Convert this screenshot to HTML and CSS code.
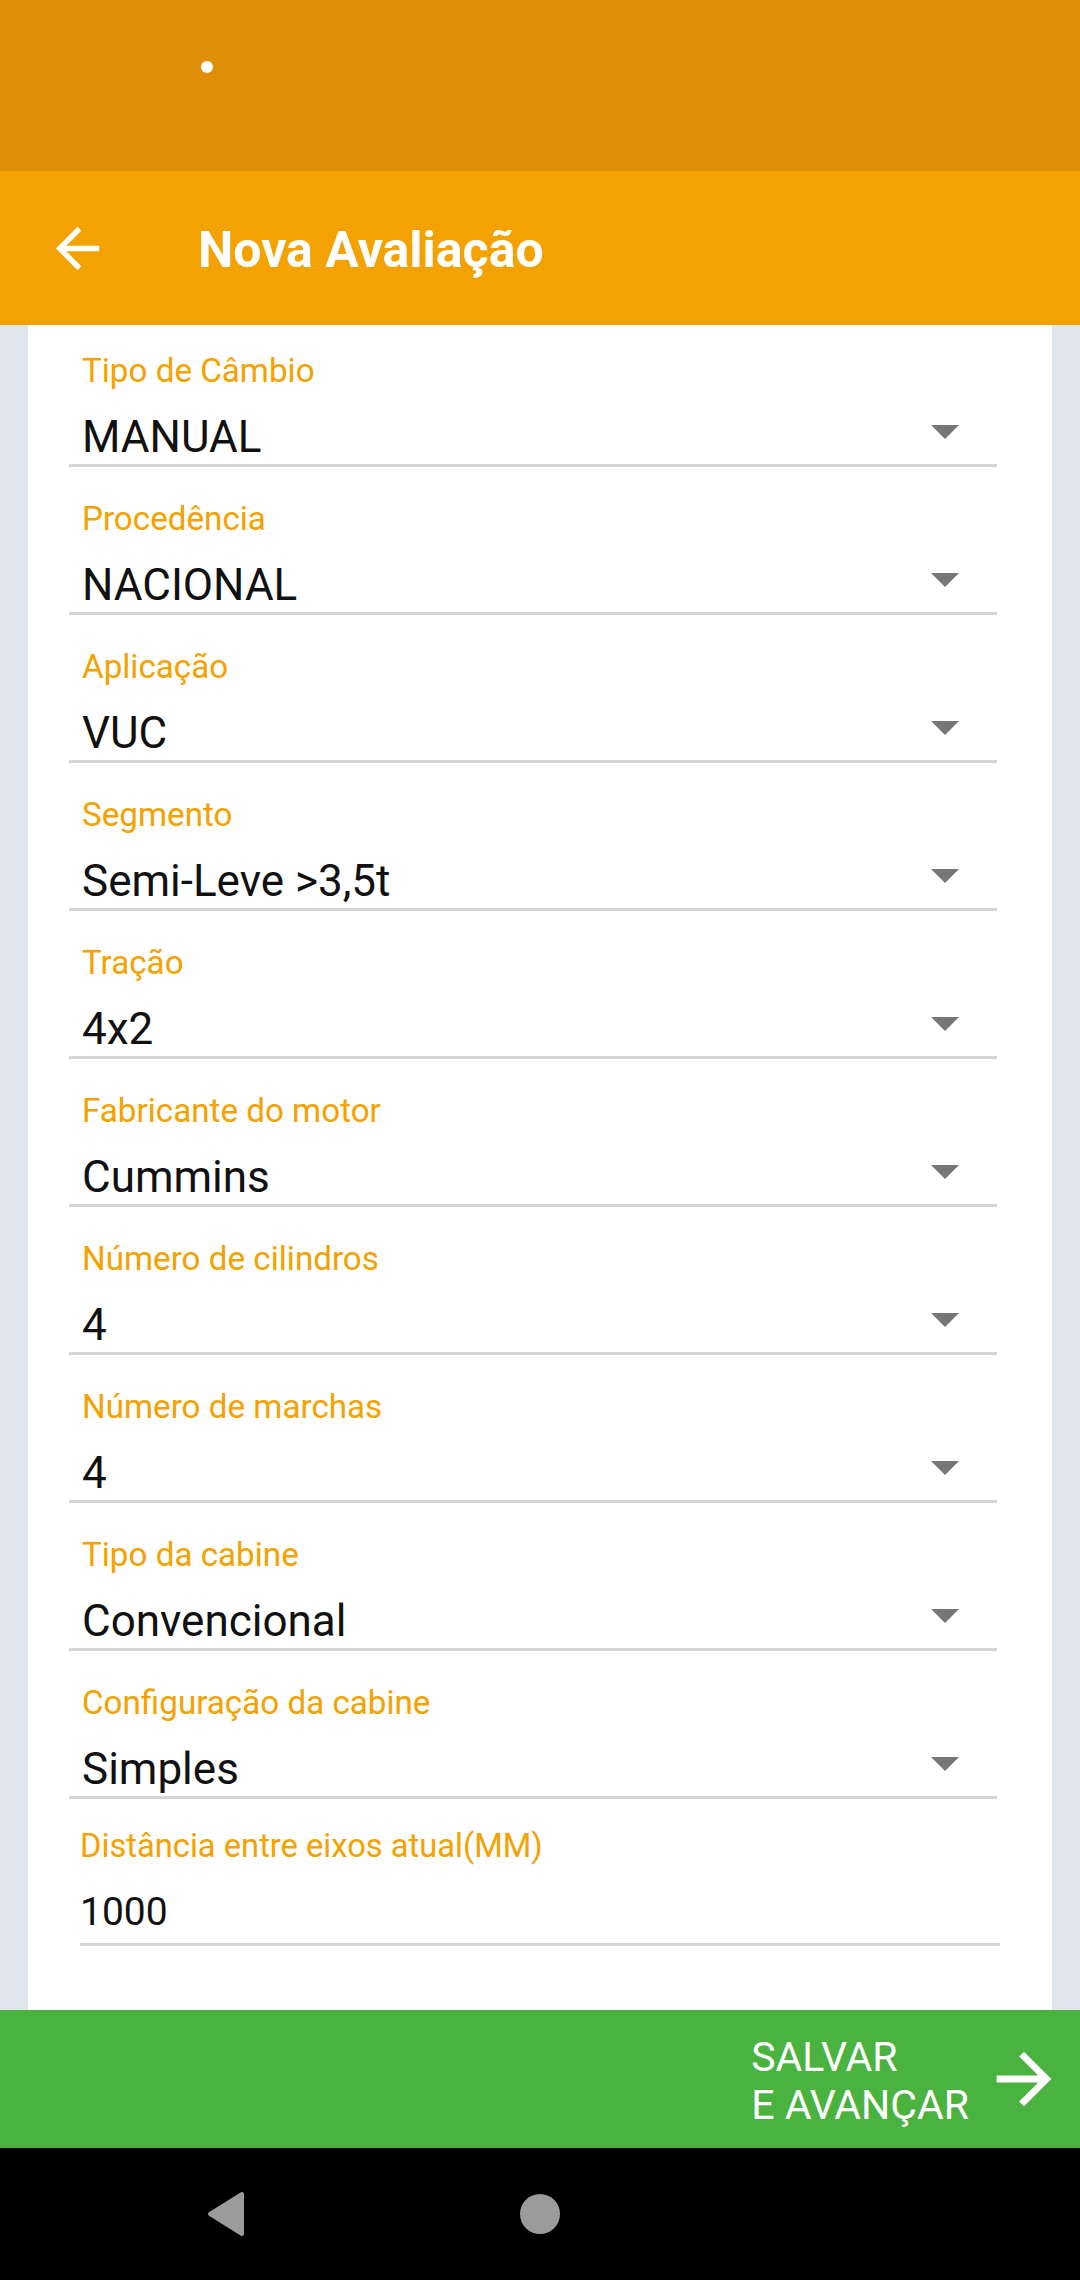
FILE: index.html
```html
<!DOCTYPE html>
<html lang="pt-BR">
<head>
<meta charset="utf-8">
<title>Nova Avaliação</title>
<link rel="stylesheet" href="styles.css">
</head>
<body>
<div class="screen">
  <div class="status-bar"><span class="status-dot"></span></div>
  <header class="app-bar">
    <svg class="back-icon" viewBox="0 0 24 24"><path d="M20 11H7.83l5.59-5.59L12 4l-8 8 8 8 1.41-1.41L7.83 13H20v-2z" fill="#fff"/></svg>
    <h1 class="title">Nova Avaliação</h1>
  </header>
  <main class="content">
    <div class="card">
      <div class="field"><div class="label">Tipo de Câmbio</div><div class="value-row"><span class="value">MANUAL</span><span class="caret"></span></div></div>
      <div class="field"><div class="label">Procedência</div><div class="value-row"><span class="value">NACIONAL</span><span class="caret"></span></div></div>
      <div class="field"><div class="label">Aplicação</div><div class="value-row"><span class="value">VUC</span><span class="caret"></span></div></div>
      <div class="field"><div class="label">Segmento</div><div class="value-row"><span class="value">Semi-Leve &gt;3,5t</span><span class="caret"></span></div></div>
      <div class="field"><div class="label">Tração</div><div class="value-row"><span class="value">4x2</span><span class="caret"></span></div></div>
      <div class="field"><div class="label">Fabricante do motor</div><div class="value-row"><span class="value">Cummins</span><span class="caret"></span></div></div>
      <div class="field"><div class="label">Número de cilindros</div><div class="value-row"><span class="value">4</span><span class="caret"></span></div></div>
      <div class="field"><div class="label">Número de marchas</div><div class="value-row"><span class="value">4</span><span class="caret"></span></div></div>
      <div class="field"><div class="label">Tipo da cabine</div><div class="value-row"><span class="value">Convencional</span><span class="caret"></span></div></div>
      <div class="field"><div class="label">Configuração da cabine</div><div class="value-row"><span class="value">Simples</span><span class="caret"></span></div></div>
      <div class="edit-field"><div class="label">Distância entre eixos atual(MM)</div><div class="edit-value">1000</div></div>
    </div>
  </main>
  <div class="save-bar">
    <div class="save-text">SALVAR<br>E AVANÇAR</div>
    <svg class="save-icon" viewBox="0 0 24 24"><path d="M12 4l-1.41 1.41L16.17 11H4v2h12.17l-5.58 5.59L12 20l8-8z" fill="#fff"/></svg>
  </div>
  <nav class="nav-bar">
    <svg class="nav-back" viewBox="0 0 40 46"><path d="M4 23 L36 3 L36 43 Z" fill="#9b9b9b" stroke="#9b9b9b" stroke-width="4" stroke-linejoin="round"/></svg>
    <span class="nav-home"></span>
  </nav>
</div>
</body>
</html>
```
FILE: styles.css
```css
* { box-sizing: border-box; }
html, body { margin: 0; padding: 0; }
body { font-family: Roboto, "Noto Sans", "Liberation Sans", sans-serif; background: #000; }
.screen { width: 1080px; height: 2280px; display: flex; flex-direction: column; overflow: hidden; }

.status-bar { height: 171px; background: #df8f07; position: relative; flex: none; }
.status-dot { position: absolute; left: 201px; top: 61px; width: 12px; height: 12px; border-radius: 50%; background: #fff; }

.app-bar { height: 154px; background: #f4a201; display: flex; align-items: center; flex: none; }
.back-icon { width: 65px; height: 65px; margin-left: 45px; flex: none; }
.title { margin: 4px 0 0 88px; font-size: 50px; line-height: 58px; font-weight: 700; color: #fff; letter-spacing: 0; }

.content { flex: 1; background: #dfe5ec; display: flex; padding: 0 28px; }
.card { flex: 1; background: #fff; display: flex; flex-direction: column; }

.field { margin: 0 55px 0 41px; padding-top: 32px; border-bottom: 3px solid #d5d5d5; }
.field:first-child { padding-top: 26px; }
.label { font-size: 33.2px; line-height: 40px; color: #f5a100; padding-left: 13px; white-space: nowrap; }
.value-row { margin-top: 20px; height: 53px; display: flex; justify-content: space-between; align-items: flex-start; padding-left: 13px; }
.value { font-size: 44px; line-height: 53px; color: #111; white-space: nowrap; }
.caret { width: 0; height: 0; margin: 14px 38px 0 0; border-left: 14px solid transparent; border-right: 14px solid transparent; border-top: 14px solid #767676; }

.edit-field { margin: 0 52px 0 52px; padding-top: 27px; padding-bottom: 7px; border-bottom: 3px solid #d5d5d5; }
.edit-field .label { padding-left: 0; font-size: 32.7px; }
.edit-value { margin-top: 22px; font-size: 39px; line-height: 48px; color: #111; }

.save-bar { height: 138px; background: #4ab33f; display: flex; justify-content: flex-end; align-items: center; flex: none; }
.save-text { font-size: 41px; line-height: 48px; color: #fff; padding-top: 4px; }
.save-icon { width: 82px; height: 82px; margin: 0 15px 0 14px; flex: none; }

.nav-bar { height: 132px; background: #000; flex: none; position: relative; }
.nav-back { position: absolute; left: 206px; top: 43px; width: 40px; height: 46px; }
.nav-home { position: absolute; left: 520px; top: 46px; width: 40px; height: 40px; border-radius: 50%; background: #9b9b9b; }
```
